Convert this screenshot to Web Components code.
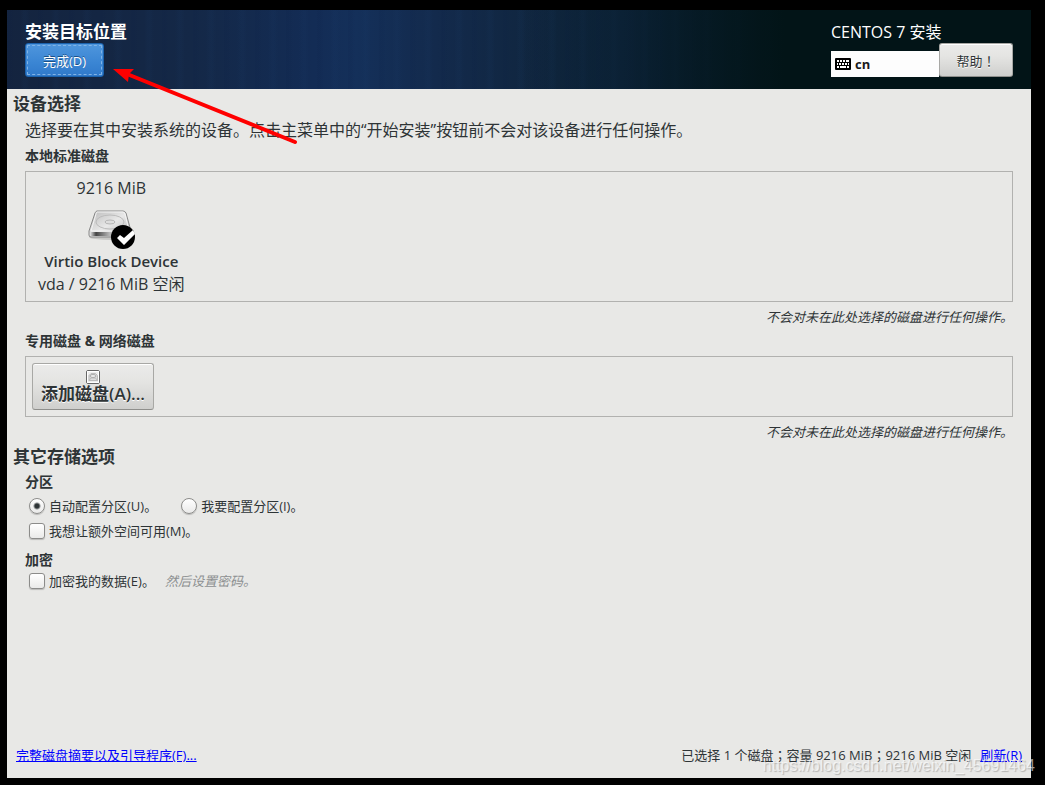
<!DOCTYPE html>
<html lang="zh-CN">
<head>
<meta charset="utf-8">
<title>安装目标位置</title>
<style>
html { background: #000; }
body {
  margin: 0; padding: 10px 14px 7px 7px; box-sizing: border-box; min-height: 100vh;
  display: flex; position: relative; overflow-x: hidden;
  font-family: "Open Sans", "Noto Sans CJK SC", sans-serif; color: #2e3436; font-size: 13px;
}
</style>
</head>
<body>
<install-destination></install-destination>
<arrow-note></arrow-note>
<water-mark>https://blog.csdn.net/weixin_45691464</water-mark>

<script>
function define(name, html) {
  const template = document.createElement('template');
  template.innerHTML = html;
  customElements.define(name, class extends HTMLElement {
    constructor() {
      super();
      this.attachShadow({ mode: 'open' }).append(template.content.cloneNode(true));
    }
  });
}

define('spoke-button', `
<style>
  :host { display: block; }
  button {
    display: flex; flex-direction: column; align-items: center; justify-content: center;
    width: 100%; height: 100%; box-sizing: border-box; margin: 0; padding: 0 8px;
    font: inherit; color: #2e3436; text-shadow: 0 1px #fff; white-space: nowrap;
    border: 1px solid #a8a8a5; border-bottom-color: #8f8f8c; border-radius: 3px;
    background: linear-gradient(#ebebea, #e4e4e2 40%, #cfcfcd);
    box-shadow: inset 0 1px #fff;
  }
  :host([primary]) button {
    color: #fff; text-shadow: 0 -1px #1c5187; border-color: #1b62ad;
    background: linear-gradient(#4f96dd, #3a85d3 60%, #3079ca);
    box-shadow: none; outline: 1px dashed #80b3e6; outline-offset: -3px;
  }
</style>
<button type="button"><slot></slot></button>`);

define('keyboard-layout', `
<style>
  :host { display: flex; align-items: center; gap: 4px; height: 26px; padding: 0 4px;
    box-sizing: border-box; background: #fdfdfd; color: #1a1a1a; font-weight: 700; }
</style>
<svg width="16" height="12" viewBox="0 0 16 12" aria-hidden="true">
  <rect width="16" height="12" rx="1"/>
  <path stroke="#fff" stroke-width="2" d="M2 3h2M5 3h2M8 3h2M11 3h3M2 6h1M4 6h2M7 6h2M10 6h2M13 6h1M2 9h2M5 9h6M12 9h2"/>
</svg>
<span><slot></slot></span>`);

define('spoke-header', `
<style>
  :host {
    display: flex; justify-content: space-between; align-items: flex-start;
    height: 79px; padding: 11px 18px 0; box-sizing: border-box; color: #fff;
    background:
      linear-gradient(90deg, transparent 50%, #0b203488 60%, #021417 76%),
      repeating-linear-gradient(90deg, #0a1c4418 0 3px, transparent 7px 13px, #20487a12 17px 19px, transparent 23px 31px),
      linear-gradient(90deg, #14243f, #142847 18%, #132c55 30%, #14305a 34%, #132a4c 42%, #10263f 52%, #0b2236 60%, #051c28 70%, #021417 80%);
  }
  h1 { margin: 0; font-size: 17px; line-height: 22px; font-weight: 700; }
  spoke-button { height: 34px; }
  .done { width: 79px; }
  .product { font-size: 16px; line-height: 22px; }
  .row { display: flex; align-items: flex-end; }
  keyboard-layout { width: 108px; }
  .help { width: 74px; }
  .wide { font-family: "Noto Sans CJK TC", sans-serif; }
</style>
<div><h1>安装目标位置</h1><spoke-button class="done" primary>完成(D)</spoke-button></div>
<div>
  <div class="product">CENTOS 7 安装</div>
  <div class="row"><keyboard-layout>cn</keyboard-layout><spoke-button class="help"><span>帮助<span class="wide" lang="zh-TW">！</span></span></spoke-button></div>
</div>`);

define('disk-group', `
<style>
  :host { display: block; }
  h3 { margin: 0 0 3px; font-size: 14px; line-height: 24px; font-weight: 700; }
  .frame { border: 1px solid #b1b1af; display: flex; }
  p { margin: 3px 0 0; text-align: right; font-style: italic; line-height: 24px; }
</style>
<h3><slot name="title"></slot></h3>
<div class="frame"><slot></slot></div>
<p>不会对未在此处选择的磁盘进行任何操作。</p>`);

define('disk-overview', `
<style>
  :host { display: flex; flex-direction: column; align-items: center; padding: 5px 12px;
    font-size: 16px; line-height: 23px; white-space: nowrap; }
  svg { display: block; margin: 10px 0 0 2px; }
  .name { font-size: 15px; font-weight: 600; }
</style>
<slot name="size"></slot>
<svg width="48" height="40" viewBox="0 0 48 40" role="img" aria-label="已选择的磁盘">
  <defs>
    <linearGradient id="top" x2="1" y2="1"><stop stop-color="#b8b8b8"/><stop offset=".5" stop-color="#e8e8e8"/><stop offset="1" stop-color="#b0b0b0"/></linearGradient>
    <linearGradient id="front"><stop stop-color="#e8e8e8"/><stop offset=".15" stop-color="#444"/><stop offset=".5" stop-color="#bbb"/><stop offset="1" stop-color="#666"/></linearGradient>
  </defs>
  <ellipse cx="23" cy="27" rx="22" ry="3" fill="#0002"/>
  <path d="M9 1h26q2 0 3 2l5 18v4q0 2-2 2H3q-2 0-2-2v-4L7 3q1-2 2-2z" fill="url(#top)" stroke="#888"/>
  <path d="M2 22h40v3q0 1-1 1H3q-1 0-1-1z" fill="url(#front)"/>
  <path d="M9 2h26q1 0 2 2l4 17H3L8 4q0-2 1-2z" fill="none" stroke="#f4f4f4"/>
  <ellipse cx="22" cy="12" rx="14" ry="7" fill="none" stroke="#bbb"/>
  <ellipse cx="22" cy="12" rx="5" ry="2" fill="#ddd" stroke="#b4b4b4"/>
  <circle cx="35" cy="27" r="12"/>
  <path d="M29 28l3-3 4 3 9-8 2 4-11 11z" fill="#fff"/>
</svg>
<span class="name"><slot name="name"></slot></span>
<slot name="detail"></slot>`);

const toggleStyle = `
  label { display: flex; align-items: center; gap: 4px; line-height: 20px; white-space: nowrap; }
  input {
    appearance: none; width: 16px; height: 16px; margin: 0; box-sizing: border-box; flex: none;
    border: 1px solid #8c8c8a; border-radius: 3px;
    background: linear-gradient(#fff, #eaeae9); box-shadow: 0 1px 1px #0003;
  }
  input[type=radio] { border-radius: 50%; }
  input:checked { background: radial-gradient(circle, #2e3436 0 2px, transparent 4px), linear-gradient(#fff, #eaeae9); }`;

define('check-item', `
<style>:host { display: block; } ${toggleStyle}</style>
<label><input type="checkbox"><span><slot></slot></span></label>`);

define('radio-pair', `
<style>:host { display: flex; gap: 24px; } label { min-width: 126px; } ${toggleStyle}</style>
<label><input type="radio" name="part" checked><span>自动配置分区(U)。</span></label>
<label><input type="radio" name="part"><span>我要配置分区(I)。</span></label>`);

define('storage-options', `
<style>
  :host { display: block; padding-left: 12px; }
  h3 { margin: 0; font-size: 14px; line-height: 22px; font-weight: 700; }
  .row { display: flex; align-items: center; gap: 10px; padding-left: 4px; height: 25px; }
  .crypt { height: 20px; }
  section + section { margin-top: 6px; }
  em { color: #8d9091; line-height: 20px; }
</style>
<section>
  <h3>分区</h3>
  <div class="row"><radio-pair></radio-pair></div>
  <div class="row"><check-item>我想让额外空间可用(M)。</check-item></div>
</section>
<section>
  <h3>加密</h3>
  <div class="row crypt"><check-item>加密我的数据(E)。</check-item><em>然后设置密码。</em></div>
</section>`);

define('status-footer', `
<style>
  :host { display: flex; justify-content: space-between; line-height: 24px; padding: 0 9px 11px; }
  a { color: #00f; }
  div { display: flex; gap: 9px; }
  .wide { font-family: "Noto Sans CJK TC", sans-serif; }
</style>
<a href="#summary">完整磁盘摘要以及引导程序(F)...</a>
<div><span>已选择 1 个磁盘<span class="wide" lang="zh-TW">；</span>容量 9216 MiB<span class="wide" lang="zh-TW">；</span>9216 MiB 空闲</span><a href="#refresh">刷新(R)</a></div>`);

define('install-destination', `
<style>
  :host { display: flex; flex-direction: column; flex: 1; min-width: 0; background: #e8e8e6; }
  main { padding: 3px 18px 0 6px; }
  h2 { margin: 0; font-size: 17px; line-height: 24px; font-weight: 700; }
  .intro { margin: 0; padding-left: 12px; font-size: 16px; line-height: 28px; }
  disk-group { padding-left: 12px; }
  .add { width: 122px; height: 47px; margin: 6px; font-size: 17px; font-weight: 600; line-height: 20px; }
  .add svg { display: block; }
  storage-options { margin-top: 2px; }
  .other { margin-top: 1px; }
  status-footer { margin-top: auto; }
</style>
<spoke-header></spoke-header>
<main>
  <h2>设备选择</h2>
  <p class="intro">选择要在其中安装系统的设备。点击主菜单中的“开始安装”按钮前不会对该设备进行任何操作。</p>
  <disk-group>
    <span slot="title">本地标准磁盘</span>
    <disk-overview>
      <span slot="size">9216 MiB</span>
      <span slot="name">Virtio Block Device</span>
      <span slot="detail">vda / 9216 MiB 空闲</span>
    </disk-overview>
  </disk-group>
  <disk-group>
    <span slot="title">专用磁盘 &amp; 网络磁盘</span>
    <spoke-button class="add">
      <svg width="14" height="14" viewBox="0 0 28 28" aria-hidden="true">
        <rect x="1" y="1" width="26" height="26" rx="3" fill="#eee" stroke="#666" stroke-width="2"/>
        <rect x="3" y="3" width="22" height="22" fill="none" stroke="#fff" stroke-width="2"/>
        <path d="M6 21V11l4-4h9l4 4v10H6l4-5h9l4 5" fill="#ddd" stroke="#bbb" stroke-width="2"/>
        <ellipse cx="14" cy="12" rx="6" ry="3" fill="#eee" stroke="#aaa" stroke-width="2"/>
      </svg>
      <span>添加磁盘(A)...</span>
    </spoke-button>
  </disk-group>
  <h2 class="other">其它存储选项</h2>
  <storage-options></storage-options>
</main>
<status-footer></status-footer>`);

define('arrow-note', `
<style>:host { position: absolute; left: 113px; top: 67px; pointer-events: none; } svg { display: block; }</style>
<svg width="186" height="78" viewBox="0 0 186 78" aria-hidden="true">
  <path d="M14 7L182 75" stroke="#f00" stroke-width="4" stroke-linecap="round"/>
  <path d="M0 2h21l-5 5-1 8z" fill="#f00"/>
</svg>`);

define('water-mark', `
<style>:host { position: absolute; right: 10px; bottom: 9px; pointer-events: none;
  font: 16px/20px "Liberation Sans", sans-serif; color: #ffffffa0; text-shadow: 1px 1px 1px #00000038; }</style>
<slot></slot>`);
</script>
</body>
</html>
